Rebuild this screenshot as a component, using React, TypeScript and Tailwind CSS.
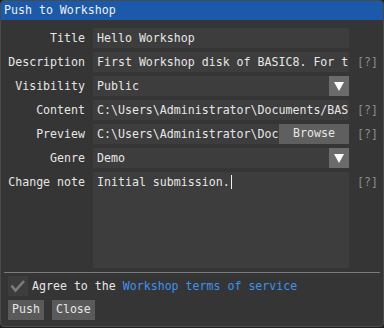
import React from "react";

const font = { fontFamily: '"DejaVu Sans Mono", "Liberation Mono", monospace' };

function Label({ children }: { children: React.ReactNode }) {
  return (
    <div className="w-[77px] shrink-0 whitespace-pre text-right leading-[20px] text-[#e6e6e6]">{children}</div>
  );
}

function Help() {
  return <div className="ml-2 leading-[20px] text-[#8c8c8c] whitespace-pre">[?]</div>;
}

function Frame({ children, extra }: { children?: React.ReactNode; extra?: React.ReactNode }) {
  return (
    <div className="ml-2 flex h-[20px] w-[256px] shrink-0 bg-[#3d3d3d] overflow-hidden">
      <div className="min-w-0 flex-1 overflow-hidden whitespace-pre pl-1 leading-[20px] text-[#e6e6e6]">
        {children}
      </div>
      {extra}
    </div>
  );
}

function ComboArrow() {
  return (
    <div className="flex h-[20px] w-[20px] shrink-0 items-center justify-center bg-[#6b6b6b]">
      <svg width="10" height="9" viewBox="0 0 10 9">
        <polygon points="0,0 10,0 5,9" fill="#ffffff" />
      </svg>
    </div>
  );
}

export default function App() {
  return (
    <div className="h-[328px] w-[384px] bg-[#1e1e1e]" style={font}>
      <div className="flex h-[327px] w-[384px] flex-col overflow-hidden rounded-[4px] border border-[#4a4a4a] bg-[#353535] text-[11.6px]">
        <div className="h-[19px] shrink-0 bg-[#1b5aab] pl-[3px] leading-[19px] text-[#f0f0f0]">
          Push to Workshop
        </div>
        <div className="flex flex-col pt-2 pl-[7px]">
          <div className="flex h-[20px] items-center">
            <Label>Title</Label>
            <Frame>Hello Workshop</Frame>
          </div>
          <div className="mt-1 flex h-[20px] items-center">
            <Label>Description</Label>
            <Frame>First Workshop disk of BASIC8. For t</Frame>
            <Help />
          </div>
          <div className="mt-1 flex h-[20px] items-center">
            <Label>Visibility</Label>
            <Frame extra={<ComboArrow />}>Public</Frame>
          </div>
          <div className="mt-1 flex h-[20px] items-center">
            <Label>Content</Label>
            <Frame>C:\Users\Administrator\Documents/BAS</Frame>
            <Help />
          </div>
          <div className="mt-1 flex h-[20px] items-center">
            <Label>Preview</Label>
            <Frame
              extra={
                <div className="flex h-[20px] w-[70px] shrink-0 items-center justify-center bg-[#5f5f5f] text-[#e6e6e6]">
                  Browse
                </div>
              }
            >
              C:\Users\Administrator\Doc
            </Frame>
            <Help />
          </div>
          <div className="mt-1 flex h-[20px] items-center">
            <Label>Genre</Label>
            <Frame extra={<ComboArrow />}>Demo</Frame>
          </div>
          <div className="mt-1 flex h-[96px] items-start">
            <Label>Change note</Label>
            <div className="ml-2 h-[96px] w-[256px] shrink-0 bg-[#3d3d3d] pl-1 leading-[20px] text-[#e6e6e6]">
              <span className="whitespace-pre">Initial submission.</span>
              <span className="relative top-[3px] ml-[1px] inline-block h-[14px] w-[1px] bg-[#f0f0f0] align-top" />
            </div>
            <Help />
          </div>
        </div>
        <div className="mt-1 ml-[3px] h-[1px] w-[376px] bg-[#7c7c7c]" />
        <div className="mt-[3px] flex h-[20px] items-center pl-[7px]">
          <div className="flex h-[20px] w-[20px] items-center justify-center bg-[#3d3d3d]">
            <svg width="20" height="20" viewBox="0 0 20 20">
              <polyline points="3.5,9.5 7.5,14.5 16,5" fill="none" stroke="#7c7c7c" strokeWidth="2.6" />
            </svg>
          </div>
          <div className="ml-1 whitespace-pre leading-[20px] text-[#e6e6e6]">
            Agree to the <span className="text-[#3d92f0]">Workshop terms of service</span>
          </div>
        </div>
        <div className="mt-1 flex h-[20px] pl-[7px]">
          <div className="flex h-[20px] items-center bg-[#5a5a5a] px-1 text-[#e6e6e6]">Push</div>
          <div className="ml-2 flex h-[20px] items-center bg-[#5a5a5a] px-1 text-[#e6e6e6]">Close</div>
        </div>
      </div>
    </div>
  );
}
